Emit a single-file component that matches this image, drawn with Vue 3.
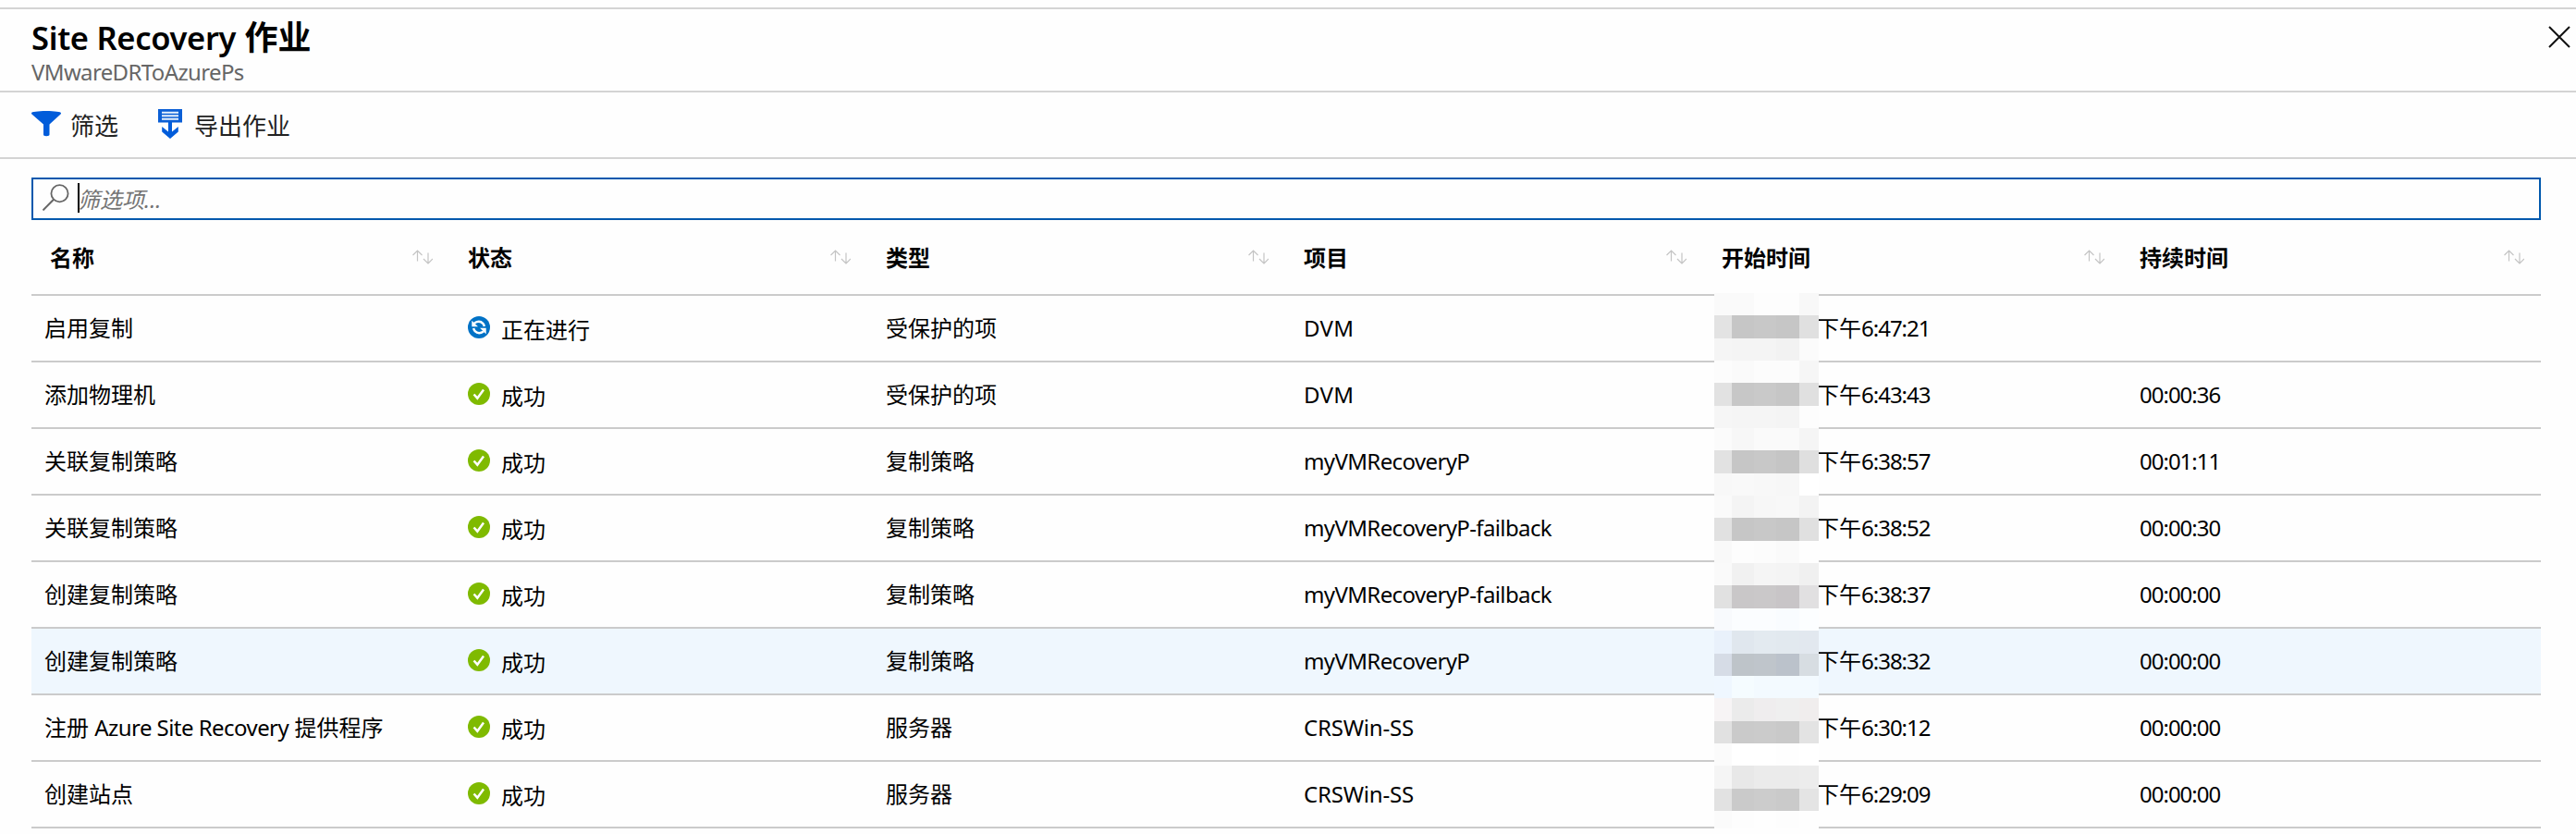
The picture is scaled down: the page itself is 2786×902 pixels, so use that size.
<script setup>
const columns = ['名称', '状态', '类型', '项目', '开始时间', '持续时间']

const jobs = [
  { name: ['启用复制'], status: 'running', type: '受保护的项', item: 'DVM', size: 'short', time: '6:47:21', duration: '' },
  { name: ['添加物理机'], status: 'done', type: '受保护的项', item: 'DVM', size: 'short', time: '6:43:43', duration: '00:00:36' },
  { name: ['关联复制策略'], status: 'done', type: '复制策略', item: 'myVMRecoveryP', size: 'long', time: '6:38:57', duration: '00:01:11' },
  { name: ['关联复制策略'], status: 'done', type: '复制策略', item: 'myVMRecoveryP-failback', size: 'long', time: '6:38:52', duration: '00:00:30' },
  { name: ['创建复制策略'], status: 'done', type: '复制策略', item: 'myVMRecoveryP-failback', size: 'long', time: '6:38:37', duration: '00:00:00' },
  { name: ['创建复制策略'], status: 'done', type: '复制策略', item: 'myVMRecoveryP', size: 'long', time: '6:38:32', duration: '00:00:00', active: true },
  { name: ['注册 ', 'Azure Site Recovery', ' 提供程序'], status: 'done', type: '服务器', item: 'CRSWin-SS', size: 'medium', time: '6:30:12', duration: '00:00:00' },
  { name: ['创建站点'], status: 'done', type: '服务器', item: 'CRSWin-SS', size: 'medium', time: '6:29:09', duration: '00:00:00' }
]

const statusText = { running: '正在进行', done: '成功' }

// Three bands per job, five blocks per band, hiding the date part of the start time.
const mosaic = [
  ['#fafafa', '#fafafa', '#fdfdfd', '#fdfdfd', '#f8f8f8'],
  ['#e3e3e3', '#c6c6c6', '#c8c8c8', '#c6c6c6', '#e0e0e0'],
  ['#f5f5f5', '#f4f4f4', '#f4f4f4', '#f2f2f2', '#fbfbfb'],
  ['#fcfcfc', '#fafafa', '#fcfcfc', '#fcfcfc', '#f6f6f6'],
  ['#e2e2e2', '#c7c7c7', '#c9c9c9', '#c6c6c6', '#e0e0e0'],
  ['#f6f6f6', '#f5f5f5', '#f5f5f5', '#f4f4f4', '#fdfdfd'],
  ['#fbfbfb', '#f7f7f7', '#fafafa', '#fafafa', '#f5f5f5'],
  ['#e2e2e2', '#c6c6c6', '#c8c8c8', '#c5c5c5', '#dfdfdf'],
  ['#f8f8f8', '#f9f9f9', '#f8f8f8', '#f7f7f7', '#ffffff'],
  ['#fafafa', '#f4f4f4', '#f7f7f7', '#f8f8f8', '#f3f3f3'],
  ['#e1e1e1', '#c6c6c6', '#c8c8c8', '#c6c6c6', '#e0e0e0'],
  ['#f9f9f9', '#fdfdfd', '#fcfcfc', '#fafafa', '#fefefe'],
  ['#fafafa', '#f1f1f1', '#f5f5f5', '#f4f4f4', '#f0f0f0'],
  ['#e1e1e1', '#c9c7c8', '#cac8c9', '#c8c5c7', '#e1e0e1'],
  ['#f8fafd', '#fbfdff', '#fbfdff', '#f9fcff', '#fcfeff'],
  ['#e9f1fb', '#e0e7ee', '#e3eaf0', '#e2e9ef', '#e2e8ef'],
  ['#d6dce6', '#bec4c9', '#bfc5cb', '#bbc2cb', '#d7dde2'],
  ['#eff7ff', '#f5fcff', '#f3faff', '#f3faff', '#f3faff'],
  ['#f7f4f5', '#ebebeb', '#efedee', '#efefef', '#f0eded'],
  ['#e1e1e1', '#cacaca', '#cbcbcb', '#c9c9c9', '#e3e3e3'],
  ['#fbfbfb', '#ffffff', '#ffffff', '#fefefe', '#ffffff'],
  ['#f5f5f5', '#e8e8e8', '#ebebeb', '#ebebeb', '#ececec'],
  ['#e2e2e2', '#cacaca', '#cccccc', '#cacaca', '#e4e4e4'],
  ['#fbfbfb', '#fdfdfd', '#fefefe', '#fdfdfd', '#fefefe']
]
</script>

<template>
  <div class="blade">
    <header class="head">
      <div>
        <h1 class="title"><span class="title-latin">Site Recovery</span> 作业</h1>
        <p class="subtitle">VMwareDRToAzurePs</p>
      </div>
      <svg class="close" viewBox="0 0 24 24"><path d="M1 1L23 23M23 1L1 23" fill="none" stroke="#111" stroke-width="2" /></svg>
    </header>

    <nav class="toolbar">
      <button class="command filter">
        <svg class="funnel" viewBox="0 0 32 28"><path d="M0 2.2C0 1 7 0 16 0s16 1 16 2.2c0 1-.5 1.300-1 1.800L19.500 14.500V25.500c0 1-1 1.700-3.300 1.700S13 26.500 13 25.500V14.500L1 4C.5 3.500 0 3.200 0 2.200z" fill="#015cda" /></svg>
        <span>筛选</span>
      </button>
      <button class="command">
        <svg class="export" viewBox="0 0 26 32">
          <path d="M0 0H26V14.500H0z" fill="#0b5fd6" />
          <path d="M4 3.700H22M4 7.200H22M4 10.700H22" stroke="#e6f0fc" stroke-width="1.900" />
          <path d="M11 14H15V24.500L21.800 19V24.500L13 32L4.200 24.500V19L11 24.500z" fill="#015cda" />
        </svg>
        <span>导出作业</span>
      </button>
    </nav>

    <main class="content">
      <div class="search">
        <svg class="lens" viewBox="0 0 30 30"><circle cx="18.500" cy="11.300" r="9.100" fill="none" stroke="#666" stroke-width="1.800" /><path d="M12 17.800L.5 29.400" stroke="#666" stroke-width="2" fill="none" /></svg>
        <i class="caret"></i>
        <span class="placeholder">筛选项...</span>
      </div>

      <section class="table">
        <div class="row row-head">
          <div v-for="c in columns" :key="c" class="cell th">
            <span>{{ c }}</span>
            <svg class="sort" viewBox="0 0 22 16"><path d="M5.500 .8V12.500M.5 6L5.500 1L10.500 6M17 3.500V15.200M12 10L17 15L22 10" fill="none" stroke="#c4c4c4" stroke-width="1.200" /></svg>
          </div>
        </div>

        <div v-for="(j, i) in jobs" :key="i" class="row" :class="{ active: j.active }">
          <div class="cell name"><span v-for="(part, p) in j.name" :key="p" :class="{ latin: p === 1 }">{{ part }}</span></div>
          <div class="cell status">
            <svg v-if="j.status === 'done'" class="badge" viewBox="0 0 24 24"><circle cx="12" cy="12" r="12" fill="#7fba00" /><path d="M6.500 12.500L10.300 16.700L17 7.500" fill="none" stroke="#fff" stroke-width="2.500" /></svg>
            <svg v-else class="badge" viewBox="0 0 24 24">
              <circle cx="12" cy="12" r="12" fill="#0072c6" />
              <path d="M7 7.500Q12.500 4 16.300 7.800Q17.500 9 17.800 11M17 16.500Q11.500 20 7.700 16.200Q6.500 15 6.200 13" fill="none" stroke="#fff" stroke-width="2.500" />
              <path d="M4.300 4.800V11.300H11zM19.700 19.200V12.700H13z" fill="#fff" />
            </svg>
            <span class="status-text">{{ statusText[j.status] }}</span>
          </div>
          <div class="cell">{{ j.type }}</div>
          <div class="cell" :class="j.size">{{ j.item }}</div>
          <div class="cell start">下午<span class="digits">{{ j.time }}</span></div>
          <div class="cell digits">{{ j.duration }}</div>
        </div>

        <div class="mosaic">
          <template v-for="(band, b) in mosaic" :key="b">
            <i v-for="(c, k) in band" :key="k" :style="{ background: c }"></i>
          </template>
        </div>
      </section>
    </main>
  </div>
</template>

<style>
body { background: #fff; }
</style>

<style scoped>
.blade {
  box-sizing: border-box;
  width: 2786px;
  height: 902px;
  padding-top: 8px;
  overflow: hidden;
  background: #fefefe;
  color: #000;
  font: 24px/36px "Noto Sans", "Noto Sans CJK SC", sans-serif;
  white-space: pre;
}
.head {
  box-sizing: border-box;
  display: flex;
  justify-content: space-between;
  height: 92px;
  padding: 9px 6px 0 34px;
  border-top: 2px solid #d4d4d4;
  border-bottom: 2px solid #d4d4d4;
}
.title {
  margin: 0;
  font-size: 36px;
  font-weight: 600;
  line-height: 44px;
}
.title-latin {
  font-size: 34.500px;
  letter-spacing: -0.300px;
}
.subtitle {
  margin: 0;
  color: #666;
  font-size: 24px;
  line-height: 30px;
  letter-spacing: -0.640px;
}
.close {
  width: 24px;
  height: 24px;
  margin-top: 9px;
}
.toolbar {
  box-sizing: border-box;
  display: flex;
  gap: 43px;
  height: 72px;
  padding: 18px 34px 0;
  border-bottom: 2px solid #d4d4d4;
}
.command {
  display: flex;
  align-items: flex-start;
  padding: 0;
  border: 0;
  background: none;
  color: #222;
  font: 26px/37px "Noto Sans", "Noto Sans CJK SC", sans-serif;
}
.funnel {
  width: 32px;
  height: 28px;
  margin: 2px 10px 0 0;
}
.export {
  width: 26px;
  height: 32px;
  margin: 0 13px 0 0;
}
.content {
  padding: 20px 38px 0 34px;
}
.search {
  box-sizing: border-box;
  display: flex;
  height: 46px;
  border: 2px solid #0058ad;
  padding: 4px 10px;
}
.lens {
  width: 30px;
  height: 30px;
}
.caret {
  width: 2px;
  height: 32px;
  margin-left: 8px;
  background: #000;
}
.placeholder {
  margin-left: -2px;
  color: #757575;
  font-style: italic;
  line-height: 35px;
}
.table {
  position: relative;
}
.row {
  box-sizing: border-box;
  display: grid;
  grid-template-columns: repeat(5, 452px) 454px;
  height: 72px;
  border-bottom: 2px solid #cbcbcb;
}
.row.active {
  background: #eff7fe;
}
.row-head {
  height: 82px;
}
.cell {
  display: flex;
  padding: 17px 18px 0 20px;
}
.cell.name {
  padding-left: 14px;
}
.th {
  justify-content: space-between;
  padding-top: 23px;
  font-weight: 700;
}
.sort {
  width: 22px;
  height: 16px;
  margin-top: 9px;
}
.badge {
  width: 24px;
  height: 24px;
  margin: 5px 12px 0 0;
}
.status-text {
  padding-top: 2px;
}
.latin {
  letter-spacing: -0.550px;
}
.long {
  letter-spacing: -0.620px;
}
.medium {
  letter-spacing: -0.200px;
}
.short {
  letter-spacing: 0.300px;
}
.digits {
  letter-spacing: -1px;
}
.cell.start {
  padding-left: 123px;
}
.mosaic {
  position: absolute;
  top: 79px;
  left: 1820px;
  display: grid;
  grid-template-columns: 19px 24px 24px 25px 21px;
  grid-auto-rows: 24.350px;
  width: 113px;
  height: 579px;
  overflow: hidden;
}
</style>
